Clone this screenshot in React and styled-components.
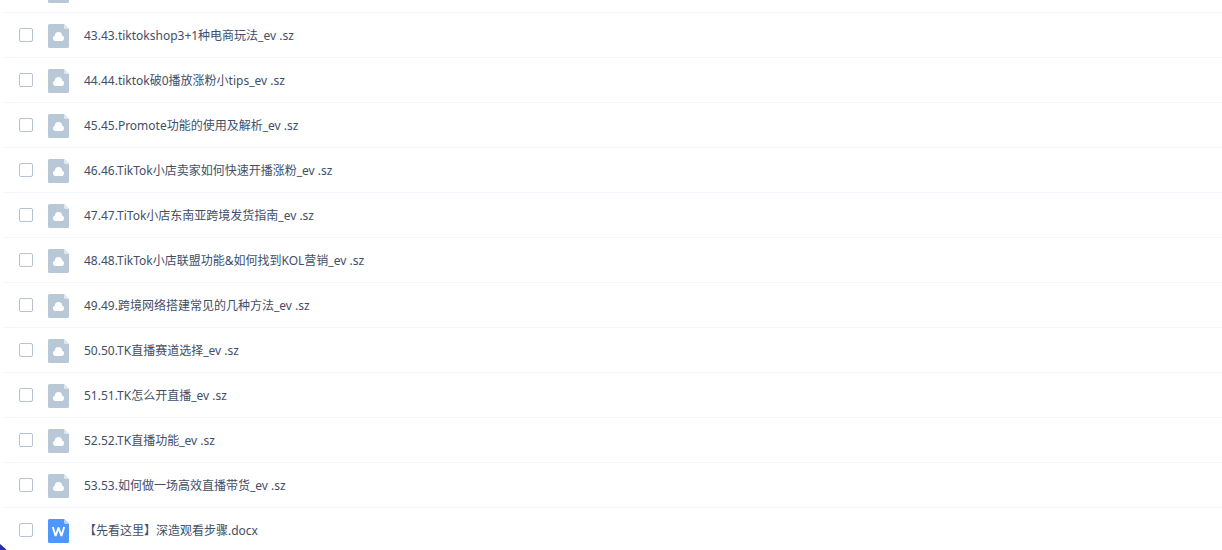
import styled, { createGlobalStyle } from "styled-components"

const files = [
    { id: 42, type: "sz", name: "" },
    { id: 43, type: "sz", name: "43.43.tiktokshop3+1种电商玩法_ev .sz" },
    { id: 44, type: "sz", name: "44.44.tiktok破0播放涨粉小tips_ev .sz" },
    { id: 45, type: "sz", name: "45.45.Promote功能的使用及解析_ev .sz" },
    { id: 46, type: "sz", name: "46.46.TikTok小店卖家如何快速开播涨粉_ev .sz" },
    { id: 47, type: "sz", name: "47.47.TiTok小店东南亚跨境发货指南_ev .sz" },
    { id: 48, type: "sz", name: "48.48.TikTok小店联盟功能&如何找到KOL营销_ev .sz" },
    { id: 49, type: "sz", name: "49.49.跨境网络搭建常见的几种方法_ev .sz" },
    { id: 50, type: "sz", name: "50.50.TK直播赛道选择_ev .sz" },
    { id: 51, type: "sz", name: "51.51.TK怎么开直播_ev .sz" },
    { id: 52, type: "sz", name: "52.52.TK直播功能_ev .sz" },
    { id: 53, type: "sz", name: "53.53.如何做一场高效直播带货_ev .sz" },
    { id: 54, type: "docx", name: "【先看这里】深造观看步骤.docx" },
]

const Cloud = () =>{
    return(
        <g fill="#fff">
            <circle cx="10.5" cy="11.6" r="3.6"/>
            <circle cx="7.8" cy="14.2" r="2.8"/>
            <circle cx="13.2" cy="14.2" r="2.8"/>
            <path d="M7.8 13h5.4v4H7.8z"/>
        </g>
    )
}

const FileIcon = ({type}) =>{
    const word = type === "docx"
    return(
        <Icon viewBox="0 0 21 24" aria-hidden="true">
            <path d="M1.5 0H16l5 5v17.5a1.5 1.5 0 0 1-1.5 1.5h-18A1.5 1.5 0 0 1 0 22.5v-21A1.5 1.5 0 0 1 1.5 0z" fill={word ? "#4d97ff" : "#b8c8d6"}/>
            <path d="M16 0l5 5h-3.5A1.5 1.5 0 0 1 16 3.5z" fill={word ? "#b3d3ff" : "#dfe8ef"}/>
            {word
                ? <path d="M4.8 8L7.6 17L10.5 8.6L13.4 17L16.2 8" fill="none" stroke="#fff" strokeWidth="1.9" strokeLinejoin="bevel"/>
                : <Cloud/>
            }
        </Icon>
    )
}

const FileRow = ({file}) =>{
    const id = `file-${file.id}`
    return(
        <Row>
            <Checkbox type="checkbox" id={id}/>
            <FileIcon type={file.type}/>
            <Name htmlFor={id}>{file.name}</Name>
        </Row>
    )
}

const App = () =>{
    return(
        <Page>
            <GlobalStyle/>
            <List>
                {files.map((file) => <FileRow key={file.id} file={file}/>)}
            </List>
            <Corner viewBox="0 0 7 6" aria-hidden="true">
                <path d="M0 0C2 1.5 4.5 3.5 6.5 6H0z" fill="#2a2fa8"/>
            </Corner>
        </Page>
    )
}

export default App;

const GlobalStyle = createGlobalStyle`
    body{
        margin: 0;
        background-color: #fff;
        font-family: "Noto Sans", "Noto Sans CJK SC", sans-serif;
    }
`

const Page = styled.main`
    height: 100vh;
    overflow: hidden;
`

/* the list is scrolled so that its first row is cut by the top edge */
const List = styled.ul`
    list-style: none;
    margin: -32px 0 0 3px;
    padding: 0;
`

const Row = styled.li`
    display: flex;
    align-items: center;
    box-sizing: border-box;
    height: 45px;
    padding-left: 16px;
    border-bottom: 1px solid #f2f6fd;
`

const Checkbox = styled.input`
    appearance: none;
    box-sizing: border-box;
    flex: none;
    width: 14px;
    height: 14px;
    margin: 0 15px 0 0;
    border: 1px solid #b4c2d3;
    border-radius: 2px;
    background-color: #fff;

    &:checked{
        background-color: #4d97ff;
    }
`

const Icon = styled.svg`
    flex: none;
    width: 21px;
    height: 24px;
    margin-top: 2px;
`

const Name = styled.label`
    margin-left: 15px;
    padding-top: 2px;
    font-size: 12px;
    line-height: 18px;
    color: #424e67;
    white-space: nowrap;
`

const Corner = styled.svg`
    position: fixed;
    left: 0;
    bottom: 0;
    width: 7px;
    height: 6px;
`
